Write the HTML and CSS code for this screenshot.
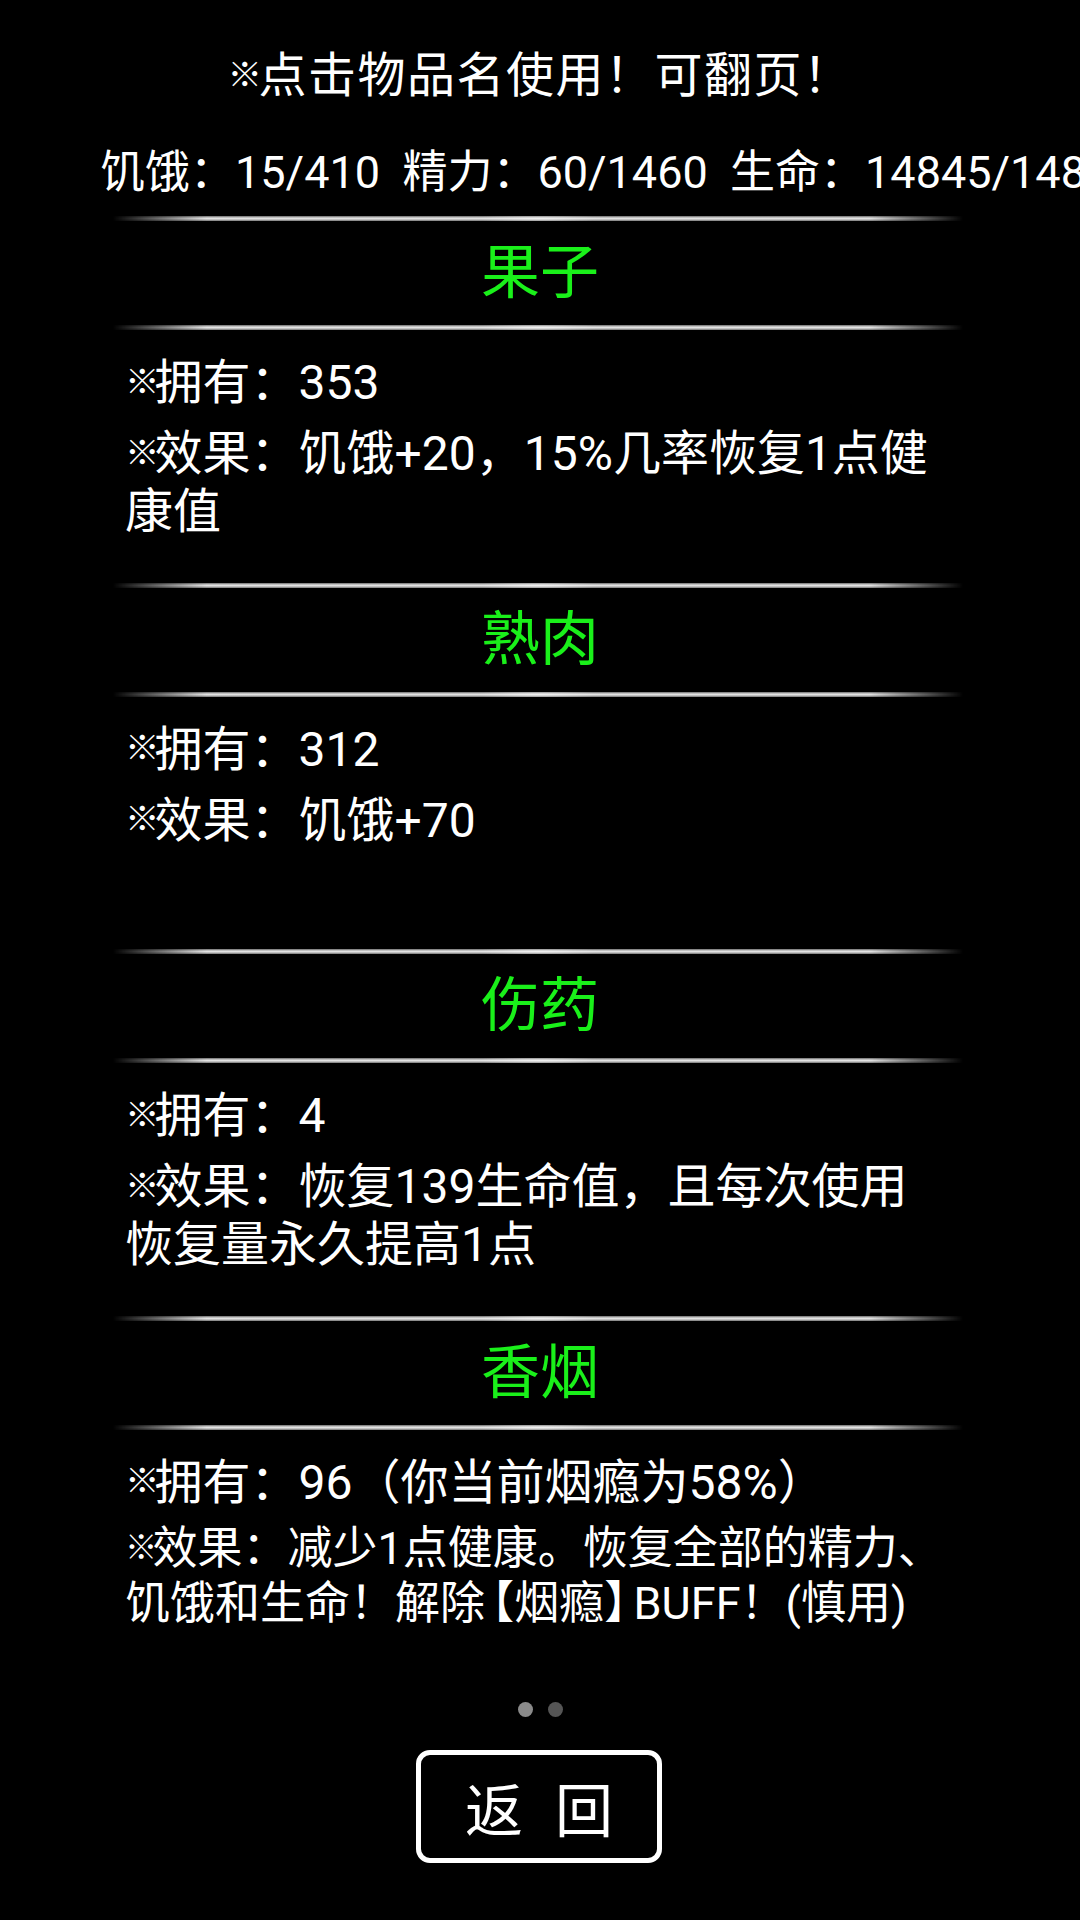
FILE: index.html
```html
<!DOCTYPE html>
<html lang="zh-CN">
<head>
<meta charset="utf-8">
<title>物品</title>
<link rel="stylesheet" href="styles.css">
</head>
<body>
<div class="page">
  <div class="title"><span class="mark">※</span>点击物品名使用！可翻页！</div>
  <div class="stats">饥饿<span class="pc">：</span>15/410  精力<span class="pc">：</span>60/1460  生命<span class="pc">：</span>14845/14845</div>
  <div class="list">
    <div class="item">
      <div class="sep"></div>
      <div class="name">果子</div>
      <div class="sep"></div>
      <div class="content">
        <p class="own"><span class="mark">※</span>拥有<span class="pc">：</span>353</p>
        <p class="eff"><span class="mark">※</span>效果<span class="pc">：</span>饥饿+20，15%几率恢复1点健康值</p>
      </div>
    </div>
    <div class="item">
      <div class="sep"></div>
      <div class="name">熟肉</div>
      <div class="sep"></div>
      <div class="content">
        <p class="own"><span class="mark">※</span>拥有<span class="pc">：</span>312</p>
        <p class="eff"><span class="mark">※</span>效果<span class="pc">：</span>饥饿+70</p>
      </div>
    </div>
    <div class="item">
      <div class="sep"></div>
      <div class="name">伤药</div>
      <div class="sep"></div>
      <div class="content">
        <p class="own"><span class="mark">※</span>拥有<span class="pc">：</span>4</p>
        <p class="eff"><span class="mark">※</span>效果<span class="pc">：</span>恢复139生命值，且每次使用恢复量永久提高1点</p>
      </div>
    </div>
    <div class="item">
      <div class="sep"></div>
      <div class="name">香烟</div>
      <div class="sep"></div>
      <div class="content">
        <p class="own"><span class="mark">※</span>拥有<span class="pc">：</span>96（你当前烟瘾为58%）</p>
        <p class="eff eff-small"><span class="mark">※</span>效果<span class="pc">：</span>减少1点健康。恢复全部的精力、饥饿和生命！解除<span class="bl">【</span>烟瘾<span class="br">】</span>BUFF！(慎用)</p>
      </div>
    </div>
  </div>
  <div class="dots">
    <span class="dot dot-on"></span>
    <span class="dot"></span>
  </div>
  <div class="btn-row">
    <div class="btn"><span>返</span><span>回</span></div>
  </div>
</div>
</body>
</html>
```

FILE: styles.css
```css
html, body {
  margin: 0;
  padding: 0;
  background: #000;
}

.page {
  width: 1080px;
  height: 1920px;
  overflow: hidden;
  background: #000;
  color: #fff;
  font-family: Roboto, "Noto Sans CJK SC", sans-serif;
}

.mark {
  font-size: 0.72em;
  line-height: 1;
  vertical-align: 0.15em;
  margin-right: -5px;
}

.pc {
  font-family: "Noto Sans CJK JP", "Noto Sans CJK SC", sans-serif;
  line-height: 1;
}

.bl {
  margin-left: -0.35em;
}

.br {
  margin-right: -0.35em;
}

.title {
  height: 60px;
  font-size: 48px;
  line-height: 60px;
  letter-spacing: 1.5px;
  text-align: center;
  padding-top: 46px;
}

.stats {
  height: 60px;
  font-size: 45px;
  line-height: 60px;
  margin-top: 37px;
  padding-left: 100px;
  white-space: pre;
}

.list {
  margin-top: 13px;
}

.item {
  height: 366.5px;
  display: flex;
  flex-direction: column;
}

.sep {
  flex: none;
  height: 5px;
  margin-left: 113px;
  width: 850px;
  background:
    radial-gradient(ellipse 60px 100% at 50% 50%, rgba(255,255,255,0.45), rgba(255,255,255,0)),
    linear-gradient(to bottom, #666 0%, #b8b8b8 25%, #e2e2e2 50%, #b8b8b8 75%, #707070 100%);
  -webkit-mask-image: linear-gradient(to right, transparent 0%, #000 11%, #000 89%, transparent 100%);
  mask-image: linear-gradient(to right, transparent 0%, #000 11%, #000 89%, transparent 100%);
}

.name {
  flex: none;
  box-sizing: border-box;
  height: 104px;
  padding-bottom: 11px;
  display: flex;
  align-items: center;
  justify-content: center;
  font-size: 59px;
  color: #1af01a;
}

.content {
  padding: 24px 0 0 125px;
  width: 825px;
}

.content p {
  margin: 0;
  font-size: 48px;
  line-height: 58px;
}

.content .eff {
  margin-top: 13px;
}

.content .eff-small {
  font-size: 45px;
  line-height: 55px;
  margin-top: 9px;
}

.dots {
  margin-top: 20px;
  display: flex;
  justify-content: center;
  gap: 15px;
  height: 15px;
}

.dot {
  width: 15px;
  height: 15px;
  border-radius: 50%;
  background: #555;
}

.dot-on {
  background: #8a8a8a;
}

.btn-row {
  margin-top: 33px;
  display: flex;
  justify-content: center;
}

.btn {
  box-sizing: border-box;
  width: 246px;
  height: 113px;
  border: 5px solid #fff;
  border-radius: 14px;
  display: flex;
  align-items: center;
  justify-content: center;
  gap: 32px;
  font-size: 58px;
  margin-left: -2px;
}
```
